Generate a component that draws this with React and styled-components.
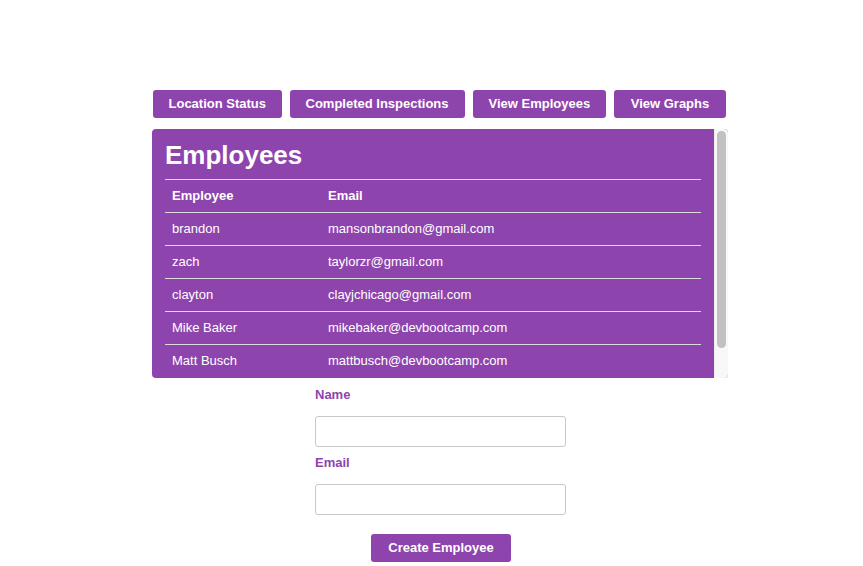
import React from "react";
import styled, { createGlobalStyle } from "styled-components";

const PURPLE = "#8e44ad";

const Global = createGlobalStyle`
  html, body { margin: 0; padding: 0; background: #fff; }
  body { font-family: "Liberation Sans", Arial, Helvetica, sans-serif; color: #333; }
  * { box-sizing: border-box; }
`;

const Page = styled.div`
  display: flex;
  flex-direction: column;
  align-items: center;
  padding: 90px 0 0 17px;
`;

const Content = styled.div`
  width: 576px;
  display: flex;
  flex-direction: column;
`;

const NavBar = styled.nav`
  display: flex;
  gap: 8px;
  padding-left: 1px;
  margin-bottom: 11px;
`;

const Button = styled.button`
  height: 28px;
  padding: 0 ${(p) => (p.$pad != null ? p.$pad : 16)}px;
  border: none;
  border-radius: 3px;
  background: ${PURPLE};
  color: #fff;
  font-family: inherit;
  font-weight: bold;
  font-size: 13px;
  line-height: 28px;
  cursor: pointer;
  white-space: nowrap;
`;

const Panel = styled.section`
  height: 249px;
  display: flex;
  border-radius: 4px;
  overflow: hidden;
  background: ${PURPLE};
`;

const PanelBody = styled.div`
  flex: 1;
  min-width: 0;
  overflow: hidden;
  padding: 12px 13px 18px;
  color: #fff;
`;

const Track = styled.div`
  width: 14px;
  flex: none;
  background: #f8f8f8;
  border-left: 1px solid #ededed;
  padding: 2px 2px 0 2px;
`;

const Thumb = styled.div`
  height: 217px;
  border-radius: 5px;
  background: #c1c1c1;
`;

const Title = styled.h2`
  margin: 0 0 9px;
  font-size: 26px;
  line-height: 29px;
  font-weight: bold;
`;

const Table = styled.table`
  width: 100%;
  border-collapse: collapse;
  font-size: 13px;
`;

const Cell = styled.td`
  border-top: 1px solid #dcdcdc;
  padding: 7px 7px;
  line-height: 18px;
  text-align: left;
  font-weight: ${(p) => (p.$head ? "bold" : "normal")};
  width: ${(p) => (p.$first ? "156px" : "auto")};
`;

const Form = styled.form`
  width: 251px;
  align-self: center;
  margin-left: 1px;
  margin-top: 8px;
  display: flex;
  flex-direction: column;
`;

const Label = styled.label`
  color: ${PURPLE};
  font-weight: bold;
  font-size: 13px;
  line-height: 18px;
  margin-bottom: 12px;
`;

const Input = styled.input`
  height: 31px;
  width: 100%;
  border: 1px solid #c8c8c8;
  border-radius: 3px;
  padding: 4px 8px;
  font-family: inherit;
  font-size: 13px;
  margin-bottom: ${(p) => p.$mb}px;
  outline: none;
`;

const Submit = styled(Button)`
  align-self: center;
  margin-left: 1px;
`;

const employees = [
  ["brandon", "mansonbrandon@gmail.com"],
  ["zach", "taylorzr@gmail.com"],
  ["clayton", "clayjchicago@gmail.com"],
  ["Mike Baker", "mikebaker@devbootcamp.com"],
  ["Matt Busch", "mattbusch@devbootcamp.com"],
];

export default function App() {
  return (
    <>
      <Global />
      <Page>
        <Content>
          <NavBar>
            <Button $pad={15.5}>Location Status</Button>
            <Button $pad={16}>Completed Inspections</Button>
            <Button $pad={16}>View Employees</Button>
            <Button $pad={16.5}>View Graphs</Button>
          </NavBar>
          <Panel>
            <PanelBody>
              <Title>Employees</Title>
              <Table>
                <thead>
                  <tr>
                    <Cell as="th" $head $first>Employee</Cell>
                    <Cell as="th" $head>Email</Cell>
                  </tr>
                </thead>
                <tbody>
                  {employees.map(([n, e]) => (
                    <tr key={n}>
                      <Cell $first>{n}</Cell>
                      <Cell>{e}</Cell>
                    </tr>
                  ))}
                </tbody>
              </Table>
            </PanelBody>
            <Track aria-hidden="true">
              <Thumb />
            </Track>
          </Panel>
          <Form onSubmit={(e) => e.preventDefault()}>
            <Label htmlFor="name">Name</Label>
            <Input id="name" $mb={7} />
            <Label htmlFor="email">Email</Label>
            <Input id="email" $mb={19} />
            <Submit type="submit" $pad={17}>Create Employee</Submit>
          </Form>
        </Content>
      </Page>
    </>
  );
}
